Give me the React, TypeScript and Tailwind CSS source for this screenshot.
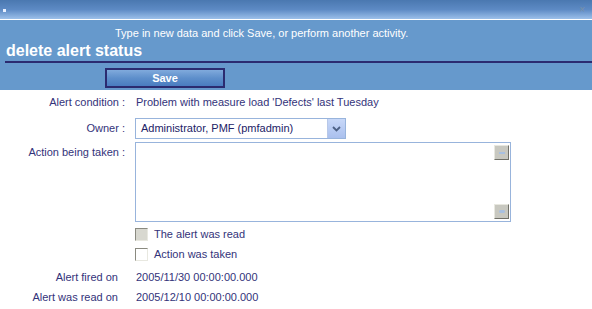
import React from 'react';

const font = { fontFamily: '"Liberation Sans", Arial, sans-serif' };

const Label = ({ children }: { children: React.ReactNode }) => (
    <div className="w-[127px] shrink-0 pr-[2px] text-right">{children}</div>
);

const Checkbox = ({ shaded }: { shaded?: boolean }) => (
    <span className={`inline-block w-[13px] h-[13px] border border-t-[#8a8a80] border-l-[#8a8a80] border-r-[#e8e8e0] border-b-[#e8e8e0] ${shaded ? 'bg-[#d8d8d0]' : 'bg-white'}`} />
);

export default function App() {
    return (
        <div className="w-[592px] h-[309px] bg-white text-[11px] text-[#33337a] overflow-hidden" style={font}>
            {/* title bar */}
            <div className="h-[19px] bg-gradient-to-b from-[#4a78b0] via-[#5d8ac4] to-[#9cc0ea] flex items-center justify-between px-[3px]">
                <span className="w-[3px] h-[3px] bg-[#e8f0ff] mt-[2px]" />
                <span className="text-[#7890a8] text-[10px] leading-none mr-[4px]">×</span>
            </div>
            <div className="h-[1px] bg-white" />

            {/* header panel */}
            <div className="bg-[#6699cc] h-[70px] pt-[6px]">
                <div className="text-white text-[11px] leading-[14px] pl-[115px]">Type in new data and click Save, or perform another activity.</div>
                <div className="text-white font-bold text-[16px] leading-[18px] pl-[6px] mt-[2px]">delete alert status</div>
                <div className="h-[2px] bg-[#2b2b70] ml-[5px] mt-[1px]" />
                <div className="pl-[105px] mt-[5px]">
                    <button className="w-[120px] h-[20px] border-2 border-[#2b2b70] bg-gradient-to-b from-[#80aadc] via-[#5e8fcb] to-[#4a7cc0] text-white font-bold text-[11px] leading-none">Save</button>
                </div>
            </div>

            {/* form */}
            <div className="pt-[5px]">
                <div className="flex h-[15px] items-center">
                    <Label>Alert condition :</Label>
                    <div className="pl-[9px]">Problem with measure load 'Defects' last Tuesday</div>
                </div>
                <div className="flex mt-[8px] items-center">
                    <Label>Owner :</Label>
                    <div className="ml-[8px] w-[211px] h-[21px] border border-[#98b4dc] flex items-center">
                        <span className="flex-1 pl-[5px] text-[#222266]">Administrator, PMF (pmfadmin)</span>
                        <span className="w-[18px] h-[19px] bg-gradient-to-b from-[#c8d8f8] to-[#aac0ee] border-l border-[#b8c8e8] flex items-center justify-center">
                            <svg width="9" height="6" viewBox="0 0 9 6"><path d="M1 1 L4.5 4.5 L8 1" stroke="#4d6185" strokeWidth="1.8" fill="none" /></svg>
                        </span>
                    </div>
                </div>
                <div className="flex mt-[3px]">
                    <Label><div className="mt-[2px]">Action being taken :</div></Label>
                    <div className="ml-[8px] w-[376px] h-[80px] border border-[#98b4dc] flex justify-end">
                        <div className="flex flex-col justify-between py-[2px] pr-[1px]">
                            <span className="w-[15px] h-[15px] bg-[#c8c8c0] border border-t-[#e8e8e0] border-l-[#e8e8e0] border-r-[#707068] border-b-[#707068] flex items-center justify-center">
                                <span className="w-[6px] h-[2px] bg-[#a8c0e0]" />
                            </span>
                            <span className="w-[15px] h-[15px] bg-[#c8c8c0] border border-t-[#e8e8e0] border-l-[#e8e8e0] border-r-[#707068] border-b-[#707068] flex items-center justify-center">
                                <span className="w-[6px] h-[3px] bg-[#a8c0e0] rounded-full" />
                            </span>
                        </div>
                    </div>
                </div>
                <div className="flex items-center mt-[6px] pl-[135px] h-[13px]">
                    <Checkbox shaded />
                    <span className="ml-[6px]">The alert was read</span>
                </div>
                <div className="flex items-center mt-[7px] pl-[135px] h-[13px]">
                    <Checkbox />
                    <span className="ml-[6px]">Action was taken</span>
                </div>
                <div className="flex mt-[9px] h-[15px] items-center">
                    <div className="w-[118px] text-right">Alert fired on</div>
                    <div className="pl-[18px]">2005/11/30 00:00:00.000</div>
                </div>
                <div className="flex mt-[5px] h-[15px] items-center">
                    <div className="w-[118px] text-right">Alert was read on</div>
                    <div className="pl-[18px]">2005/12/10 00:00:00.000</div>
                </div>
            </div>
        </div>
    );
}
